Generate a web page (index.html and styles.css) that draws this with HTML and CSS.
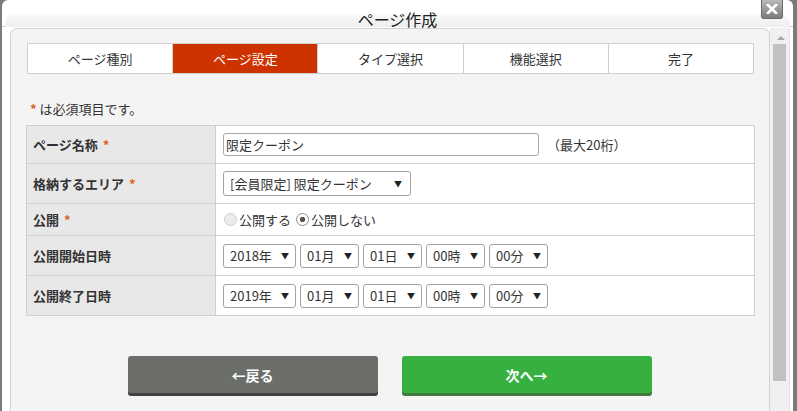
FILE: index.html
```html
<!DOCTYPE html>
<html lang="ja">
<head>
  <title>ページ作成</title>
  <meta charset="UTF-8">
  <meta name="viewport" content="width=device-width, initial-scale=1.0">
  <link rel="stylesheet" href="styles.css">
</head>
<body>
  <div class="dialog">
    <div class="titlebar">
      <div class="band">ページ作成</div>
      <a class="close" href="#" title="閉じる">
        <svg width="12" height="10" viewBox="0 0 12 10"><path d="M2 1 L10 9 M10 1 L2 9" stroke="#fff" stroke-width="2.6" stroke-linecap="square"/></svg>
      </a>
    </div>
    <div class="frame">
      <div class="panel">
        <ul class="steps">
          <li>ページ種別</li>
          <li class="current">ページ設定</li>
          <li>タイプ選択</li>
          <li>機能選択</li>
          <li>完了</li>
        </ul>

        <p class="note"><span class="req">*</span> は必須項目です。</p>

        <table class="form">
          <tr class="r-name">
            <th>ページ名称 <span class="req">*</span></th>
            <td><input type="text" class="text" value="限定クーポン"><span class="hint">（最大20桁）</span></td>
          </tr>
          <tr class="r-area">
            <th>格納するエリア <span class="req">*</span></th>
            <td>
              <span class="sel"><select class="area"><option>[会員限定] 限定クーポン</option></select></span>
            </td>
          </tr>
          <tr class="r-pub">
            <th>公開 <span class="req">*</span></th>
            <td>
              <label class="radio"><input type="radio" name="pub" class="off">公開する</label>
              <label class="radio"><input type="radio" name="pub" checked>公開しない</label>
            </td>
          </tr>
          <tr class="r-date">
            <th>公開開始日時</th>
            <td>
              <div class="dates">
                <span class="sel"><select class="year"><option>2018年</option></select></span>
                <span class="sel"><select><option>01月</option></select></span>
                <span class="sel"><select><option>01日</option></select></span>
                <span class="sel"><select><option>00時</option></select></span>
                <span class="sel"><select><option>00分</option></select></span>
              </div>
            </td>
          </tr>
          <tr class="r-date">
            <th>公開終了日時</th>
            <td>
              <div class="dates">
                <span class="sel"><select class="year"><option>2019年</option></select></span>
                <span class="sel"><select><option>01月</option></select></span>
                <span class="sel"><select><option>01日</option></select></span>
                <span class="sel"><select><option>00時</option></select></span>
                <span class="sel"><select><option>00分</option></select></span>
              </div>
            </td>
          </tr>
        </table>

        <div class="actions">
          <button type="button" class="btn back">←戻る</button>
          <button type="button" class="btn next">次へ→</button>
        </div>
      </div>
      <div class="scrollbar">
        <span class="up"></span>
        <span class="thumb"></span>
      </div>
    </div>
  </div>
</body>
</html>
```

FILE: styles.css
```css
html, body { margin: 0; padding: 0; }
body { background: #7b7b7b; font-family: "Noto Sans CJK JP", sans-serif; font-size: 13px; color: #333; overflow: hidden; }

.dialog { margin-left: 2px; width: 791px; height: 411px; background: #fff; border-radius: 6px 6px 0 0; overflow: hidden; display: flex; flex-direction: column; }

.titlebar { position: relative; height: 27px; padding: 14px 3px 0; box-sizing: border-box; border-bottom: 1px solid #c9c9c9; }
.band { height: 13px; line-height: 10px; text-align: center; font-size: 16px; color: #222; background: linear-gradient(#f9f9f9, #eeeeee); border-radius: 9px 9px 0 0; }
.close { position: absolute; top: 0; left: 759px; width: 22px; height: 19px; box-sizing: border-box; border: 1px solid #6a6a6a; border-top: none; border-radius: 0 0 3px 3px; background: linear-gradient(#b9b9b9, #7c7c7c); display: flex; align-items: center; justify-content: center; }

.frame { flex: 1; display: flex; padding: 1px 3px 0 8px; min-height: 0; }
.panel { flex: 1; background: #f4f4f4; border: 1px solid #d2d2d2; border-bottom: none; border-radius: 7px 7px 0 0; padding: 14px 15px 0 16px; }

.scrollbar { position: relative; width: 20px; background: #f0f0f0; border-right: 1px solid #e2e2e2; }
.scrollbar .up { position: absolute; top: 8px; left: 7px; width: 0; height: 0; border-left: 4px solid transparent; border-right: 4px solid transparent; border-bottom: 4px solid #a6a6a6; }
.scrollbar .thumb { position: absolute; top: 16px; left: 3px; width: 13px; height: 337px; background: #c1c1c1; }

.steps { list-style: none; margin: 0; padding: 0; display: flex; height: 31px; border: 1px solid #cfcfcf; background: #fff; box-sizing: border-box; }
.steps li { flex: 1; display: flex; align-items: center; justify-content: center; border-left: 1px solid #cfcfcf; font-size: 13px; color: #333; }
.steps li:first-child { border-left: none; }
.steps li.current { background: #cc3300; color: #fff; }

.req { color: #e0601e; font-weight: bold; margin-left: 2px; }
.note .req { margin-left: 0; }
.note { margin: 26px 0 7px 3px; line-height: 18px; }

.form { width: 729px; margin: 0 -1px; border-collapse: collapse; background: #fff; }
.form th, .form td { border: 1px solid #cfcfcf; padding: 0 7px; vertical-align: middle; text-align: left; }
.form th { width: 175px; background: #e8e8e8; font-weight: bold; padding-left: 6px; }
.form .r-name td, .form .r-name th { height: 37px; }
.form .r-area td, .form .r-area th { height: 39px; }
.form .r-pub td, .form .r-pub th { height: 31px; }
.form .r-date td, .form .r-date th { height: 39px; }

.text { width: 316px; height: 23px; box-sizing: border-box; border: 1px solid #a9a9a9; border-radius: 3px; padding: 0 2px; font: 13px "Noto Sans CJK JP", sans-serif; color: #333; vertical-align: middle; }
.hint { margin-left: 8px; vertical-align: middle; }

.sel { position: relative; display: inline-block; vertical-align: middle; }
.sel::after { content: "▼"; position: absolute; right: 7px; top: 50%; transform: translateY(-55%); font-size: 8px; color: #222; pointer-events: none; }
.sel select { appearance: none; -webkit-appearance: none; display: block; width: 59px; height: 24px; box-sizing: border-box; border: 1px solid #a3a3a3; border-radius: 3px; background: #fff; padding: 0 16px 0 6px; font: 13px "Noto Sans CJK JP", sans-serif; color: #333; }
.sel select.year { width: 73px; }
.sel select.area { width: 188px; height: 25px; padding-left: 6px; }
.sel:has(.area)::after { right: 9px; }

.dates { display: flex; gap: 4px; }

.radio { display: inline-flex; align-items: center; margin-right: 1px; }
.radio input { appearance: none; -webkit-appearance: none; width: 13px; height: 13px; margin: 0 2px 0 1px; border-radius: 50%; border: 1px solid #b8b8b8; background: #fff; box-sizing: border-box; }
.radio input.off { background: #ebebeb; border-color: #cfcfcf; }
.radio input:checked { background: radial-gradient(circle, #555 0, #555 2.5px, #fff 3px); border-color: #8a8a8a; }

.actions { display: flex; justify-content: center; gap: 24px; margin-top: 40px; padding-right: 2px; }
.btn { width: 250px; height: 37px; border: none; border-radius: 3px; color: #fff; font: bold 14px "Noto Sans CJK JP", sans-serif; cursor: pointer; }
.btn.back { background: #6b6e69; box-shadow: 0 3px 0 #404240; }
.btn.next { background: #36b03f; box-shadow: 0 3px 0 #44793f; }
```
